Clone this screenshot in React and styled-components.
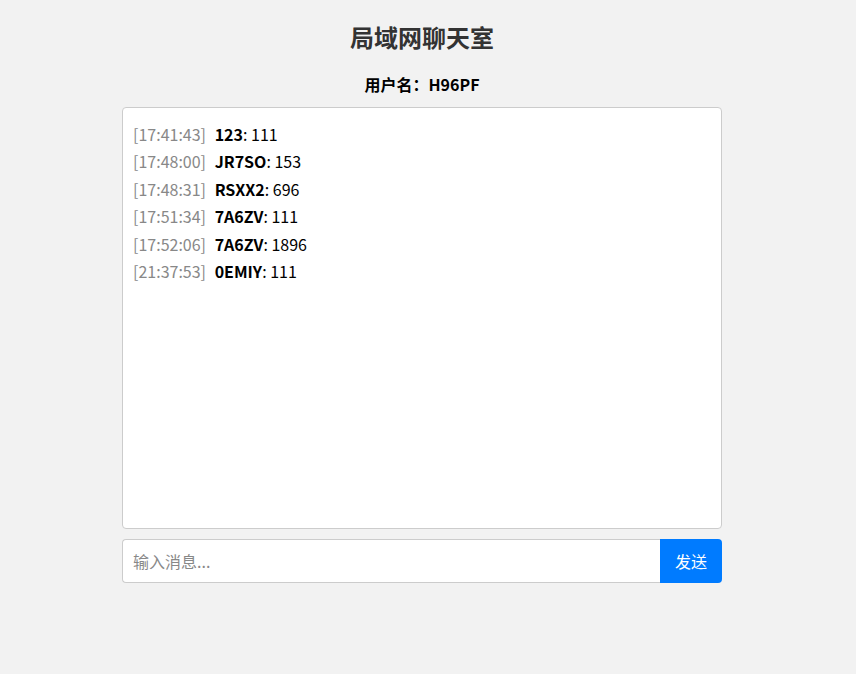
import React, { useState } from "react";
import styled, { createGlobalStyle } from "styled-components";

const GlobalStyle = createGlobalStyle`
  body {
    margin: 0;
    background: #f2f2f2;
    font-family: "Noto Sans CJK SC", "Noto Sans", sans-serif;
  }
`;

const Page = styled.div`
  width: 600px;
  margin: 0 auto;
  padding: 20px 12px 0 0;
`;

const Title = styled.h2`
  margin: 0 0 18px;
  text-align: center;
  font-size: 24px;
  line-height: 34px;
  color: #333;
`;

const UserName = styled.div`
  text-align: center;
  font-weight: bold;
  font-size: 16px;
  line-height: 24px;
  margin-bottom: 11px;
`;

const ChatBox = styled.div`
  height: 400px;
  background: #fff;
  border: 1px solid #ccc;
  border-radius: 4px;
  padding: 10px;
  overflow-y: auto;
`;

const Message = styled.div`
  margin: 5px 0;
  font-size: 16px;
  line-height: 22.4px;
  color: #000;
`;

const Time = styled.span`
  color: #888;
  margin-right: 5px;
`;

const InputRow = styled.div`
  display: flex;
  margin-top: 10px;
`;

const MessageInput = styled.input`
  flex: 1;
  padding: 10px;
  font-size: 16px;
  line-height: 22px;
  font-family: inherit;
  border: 1px solid #ccc;
  border-right: none;
  border-radius: 4px 0 0 4px;
  outline: none;
  &::placeholder {
    color: #888;
  }
`;

const SendButton = styled.button`
  width: 62px;
  padding: 0;
  font-size: 16px;
  font-family: inherit;
  color: #fff;
  background: #007bff;
  border: none;
  border-radius: 0 4px 4px 0;
  cursor: pointer;
`;

const messages = [
  { time: "17:41:43", user: "123", text: "111" },
  { time: "17:48:00", user: "JR7SO", text: "153" },
  { time: "17:48:31", user: "RSXX2", text: "696" },
  { time: "17:51:34", user: "7A6ZV", text: "111" },
  { time: "17:52:06", user: "7A6ZV", text: "1896" },
  { time: "21:37:53", user: "0EMIY", text: "111" },
];

export default function App() {
  const [value, setValue] = useState("");

  return (
    <Page>
      <GlobalStyle />
      <Title>局域网聊天室</Title>
      <UserName>用户名：H96PF</UserName>
      <ChatBox>
        {messages.map((m, i) => (
          <Message key={i}>
            <Time>[{m.time}]</Time> <strong>{m.user}</strong>: {m.text}
          </Message>
        ))}
      </ChatBox>
      <InputRow>
        <MessageInput
          placeholder="输入消息..."
          value={value}
          onChange={(e) => setValue(e.target.value)}
        />
        <SendButton>发送</SendButton>
      </InputRow>
    </Page>
  );
}
